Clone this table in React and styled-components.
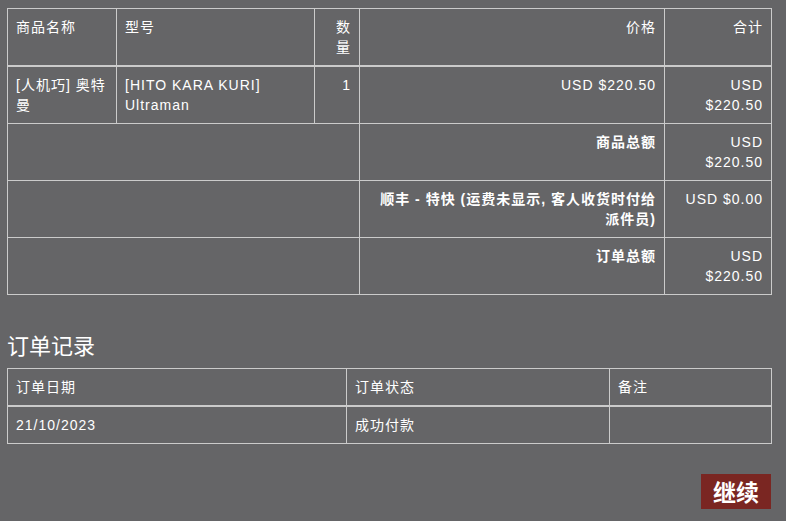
import React from "react";
import styled, { createGlobalStyle } from "styled-components";

const Global = createGlobalStyle`
  html, body { margin: 0; padding: 0; background: #656567; }
  body {
    font-family: "Liberation Sans", "Noto Sans CJK SC", Arial, sans-serif;
    font-size: 14px;
    color: #ffffff;
  }
`;

const Page = styled.div`
  padding: 8px 14px 12px 7px;
  display: flex;
  flex-direction: column;
`;

const Table = styled.table`
  width: 764px;
  border-collapse: collapse;
  table-layout: fixed;
  letter-spacing: 1px;
`;

const Cell = styled.td`
  border: 1px solid #cbcbcb;
  padding: 8px;
  line-height: 20px;
  vertical-align: top;
  text-align: ${(p) => (p.$right ? "right" : "left")};
  font-weight: ${(p) => (p.$bold ? "bold" : "normal")};
`;

const Head = styled.th`
  border: 1px solid #cbcbcb;
  border-bottom: 2px solid #cbcbcb;
  padding: 8px;
  line-height: 20px;
  vertical-align: top;
  font-weight: normal;
  text-align: ${(p) => (p.$right ? "right" : "left")};
`;

const Title = styled.h2`
  margin: 37px 0 6px 0;
  font-size: 22px;
  font-weight: normal;
  line-height: 30px;
`;

const Actions = styled.div`
  display: flex;
  justify-content: flex-end;
  margin-top: 30px;
  width: 764px;
`;

const Button = styled.button`
  background: #7a2622;
  color: #ffffff;
  border: none;
  font-family: "Noto Sans CJK SC", sans-serif;
  font-size: 23px;
  font-weight: bold;
  width: 70px;
  height: 35px;
  padding: 0;
  line-height: 35px;
`;

export default function App() {
  return (
    <Page>
      <Global />
      <Table>
        <colgroup>
          <col style={{ width: 109 }} />
          <col style={{ width: 198 }} />
          <col style={{ width: 45 }} />
          <col style={{ width: 305 }} />
          <col style={{ width: 107 }} />
        </colgroup>
        <thead>
          <tr>
            <Head>商品名称</Head>
            <Head>型号</Head>
            <Head $right>数量</Head>
            <Head $right>价格</Head>
            <Head $right>合计</Head>
          </tr>
        </thead>
        <tbody>
          <tr>
            <Cell>[人机巧] 奥特曼</Cell>
            <Cell>[HITO KARA KURI] Ultraman</Cell>
            <Cell $right>1</Cell>
            <Cell $right>USD $220.50</Cell>
            <Cell $right>USD $220.50</Cell>
          </tr>
          <tr>
            <Cell colSpan={3} />
            <Cell $right $bold>商品总额</Cell>
            <Cell $right>USD $220.50</Cell>
          </tr>
          <tr>
            <Cell colSpan={3} />
            <Cell $right $bold>顺丰 - 特快 (运费未显示, 客人收货时付给派件员)</Cell>
            <Cell $right>USD $0.00</Cell>
          </tr>
          <tr>
            <Cell colSpan={3} />
            <Cell $right $bold>订单总额</Cell>
            <Cell $right>USD $220.50</Cell>
          </tr>
        </tbody>
      </Table>

      <Title>订单记录</Title>
      <Table>
        <colgroup>
          <col style={{ width: 339 }} />
          <col style={{ width: 263 }} />
          <col style={{ width: 162 }} />
        </colgroup>
        <thead>
          <tr>
            <Head>订单日期</Head>
            <Head>订单状态</Head>
            <Head>备注</Head>
          </tr>
        </thead>
        <tbody>
          <tr>
            <Cell>21/10/2023</Cell>
            <Cell>成功付款</Cell>
            <Cell></Cell>
          </tr>
        </tbody>
      </Table>

      <Actions>
        <Button>继续</Button>
      </Actions>
    </Page>
  );
}
